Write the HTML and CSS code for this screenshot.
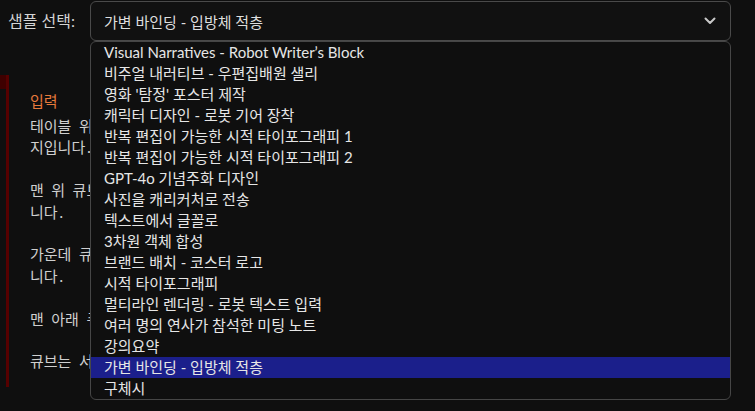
FILE: index.html
```html
<!DOCTYPE html>
<html lang="ko">
<head>
<meta charset="utf-8">
<title>샘플 선택</title>
<link rel="stylesheet" href="styles.css">
</head>
<body>
<div class="top">
  <label class="label">샘플 선택:</label>
  <div class="select-wrap">
    <div class="select">
      <span class="select-value">가변 바인딩 - 입방체 적층</span>
      <svg class="chevron" width="12" height="8" viewBox="0 0 12 8"><path d="M1.5 1.5 L6 6 L10.5 1.5" fill="none" stroke="#c8c8c8" stroke-width="2" stroke-linecap="round" stroke-linejoin="round"/></svg>
    </div>
    <ul class="list">
      <li>Visual Narratives - Robot Writer’s Block</li>
      <li>비주얼 내러티브 - 우편집배원 샐리</li>
      <li>영화 '탐정' 포스터 제작</li>
      <li>캐릭터 디자인 - 로봇 기어 장착</li>
      <li>반복 편집이 가능한 시적 타이포그래피 1</li>
      <li>반복 편집이 가능한 시적 타이포그래피 2</li>
      <li>GPT-4o 기념주화 디자인</li>
      <li>사진을 캐리커처로 전송</li>
      <li>텍스트에서 글꼴로</li>
      <li>3차원 객체 합성</li>
      <li>브랜드 배치 - 코스터 로고</li>
      <li>시적 타이포그래피</li>
      <li>멀티라인 렌더링 - 로봇 텍스트 입력</li>
      <li>여러 명의 연사가 참석한 미팅 노트</li>
      <li>강의요약</li>
      <li class="selected">가변 바인딩 - 입방체 적층</li>
      <li>구체시</li>
    </ul>
  </div>
</div>
<section class="panel">
  <h3 class="panel-title">입력</h3>
  <div class="panel-body">
    <p>테이블 위에 세 개의 큐브가 쌓여 있는 이미<br>지입니다.</p>
    <p>맨 위 큐브는 파란색이며 숫자 1이 적혀 있습<br>니다.</p>
    <p>가운데 큐브는 빨간색이며 숫자 2가 적혀 있습<br>니다.</p>
    <p>맨 아래 큐브는 초록색이며 숫자 3이 적혀 있습니다.</p>
    <p>큐브는 서로 정확히 맞춰 쌓여 있습니다.</p>
  </div>
</section>
</body>
</html>
```

FILE: styles.css
```css
* { box-sizing: border-box; }

html, body {
  margin: 0;
  padding: 0;
  background: #0f0f0f;
  height: 100%;
  overflow: hidden;
}

body {
  font-family: "Lato", "Noto Sans CJK KR", "Noto Sans", sans-serif;
  color: #e4e4e4;
  font-size: 15px;
}

.top {
  display: flex;
  align-items: flex-start;
  height: 42px;
  padding-top: 1px;
}

.label {
  width: 90px;
  padding-left: 8px;
  line-height: 40px;
  font-size: 16px;
  color: #d4d4d4;
}

.select-wrap {
  position: relative;
  width: 641px;
  z-index: 2;
}

.select {
  height: 40px;
  border: 1px solid #4a4a4a;
  border-radius: 6px;
  background: #111111;
  display: flex;
  align-items: center;
  justify-content: space-between;
  padding: 0 14px 0 13px;
}

.select-value {
  color: #dedede;
  font-size: 15px;
}

.chevron {
  display: block;
}

.list {
  position: absolute;
  top: 40px;
  left: 0;
  width: 100%;
  margin: 0;
  padding: 0;
  list-style: none;
  border: 1px solid #464646;
  border-radius: 6px;
  background: #0f0f0f;
}

.list li {
  height: 21px;
  line-height: 21px;
  padding-left: 13px;
  font-size: 15px;
  color: #e6e6e6;
  white-space: nowrap;
}

.list li.selected {
  background: #1b1f8b;
}

.panel {
  position: relative;
  margin-top: 33px;
  margin-left: 6px;
  width: 85px;
  height: 312px;
  border-left: 3px solid #560000;
  padding-left: 21px;
  padding-top: 15px;
  overflow: visible;
}

.panel::before {
  content: "";
  position: absolute;
  left: -9px;
  top: 0;
  width: 6px;
  height: 14px;
  background: #3e0000;
}

.panel-title {
  margin: 0;
  font-family: "Noto Sans CJK KR", sans-serif;
  font-size: 15px;
  font-weight: 400;
  line-height: 21px;
  color: #e77a3c;
  margin-bottom: 4px;
}

.panel-body {
  width: 61px;
  overflow: hidden;
  font-family: "Noto Sans Mono CJK KR", "DejaVu Sans Mono", monospace;
  font-size: 15px;
  line-height: 21.4px;
  color: #cfcfcf;
  white-space: nowrap;
}

.panel-body p {
  margin: 0 0 21.4px 0;
}

.panel-body p:last-child {
  margin-bottom: 0;
}
```
